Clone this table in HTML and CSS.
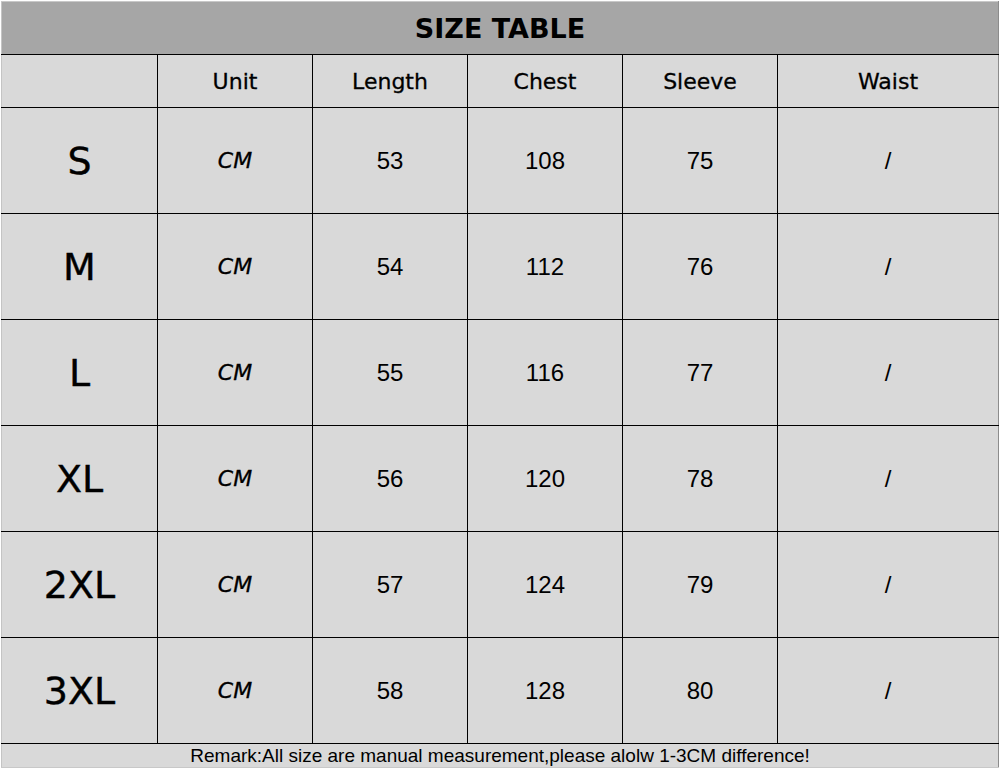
FILE: index.html
```html
<!DOCTYPE html>
<html lang="en">
<head>
<meta charset="utf-8">
<title>Size Table</title>
<link rel="stylesheet" href="styles.css">
</head>
<body>
<table class="size-table">
  <colgroup>
    <col class="c-size">
    <col class="c-std">
    <col class="c-std">
    <col class="c-std">
    <col class="c-std">
    <col class="c-wide">
  </colgroup>
  <tr class="title-row"><td colspan="6">SIZE TABLE</td></tr>
  <tr class="head-row">
    <td class="first"></td>
    <td>Unit</td>
    <td>Length</td>
    <td>Chest</td>
    <td>Sleeve</td>
    <td class="last">Waist</td>
  </tr>
  <tr class="data-row"><td class="first size">S</td><td class="unit">CM</td><td class="num">53</td><td class="num">108</td><td class="num">75</td><td class="num last">/</td></tr>
  <tr class="data-row"><td class="first size">M</td><td class="unit">CM</td><td class="num">54</td><td class="num">112</td><td class="num">76</td><td class="num last">/</td></tr>
  <tr class="data-row"><td class="first size">L</td><td class="unit">CM</td><td class="num">55</td><td class="num">116</td><td class="num">77</td><td class="num last">/</td></tr>
  <tr class="data-row"><td class="first size">XL</td><td class="unit">CM</td><td class="num">56</td><td class="num">120</td><td class="num">78</td><td class="num last">/</td></tr>
  <tr class="data-row"><td class="first size">2XL</td><td class="unit">CM</td><td class="num">57</td><td class="num">124</td><td class="num">79</td><td class="num last">/</td></tr>
  <tr class="data-row"><td class="first size">3XL</td><td class="unit">CM</td><td class="num">58</td><td class="num">128</td><td class="num">80</td><td class="num last">/</td></tr>
  <tr class="remark-row"><td colspan="6">Remark:All size are manual measurement,please alolw 1-3CM difference!</td></tr>
</table>
</body>
</html>
```
FILE: styles.css
```css
html, body {
  margin: 0;
  padding: 0;
  background: #ffffff;
}

body {
  padding: 1px 0 0 1px;
  font-family: "DejaVu Sans", "Liberation Sans", sans-serif;
  color: #000;
}

.size-table {
  border-collapse: collapse;
  table-layout: fixed;
  width: 997px;
}

.c-size { width: 156px; }
.c-std { width: 155px; }
.c-wide { width: 221px; }

.size-table td {
  border: 1px solid #000;
  background: #d9d9d9;
  text-align: center;
  vertical-align: middle;
  padding: 0;
  overflow: hidden;
  white-space: nowrap;
}

.size-table td.first { border-left-color: #c4c4c4; }
.size-table td.last { border-right-color: #8c8c8c; }

.title-row td {
  height: 52px;
  background: #a6a6a6;
  font-weight: bold;
  font-size: 27px;
  border-top-color: #c8c8c8;
  border-left-color: #c4c4c4;
  border-right-color: #8c8c8c;
}

.head-row td {
  height: 52px;
  font-size: 22px;
  -webkit-text-stroke: 0.3px #000;
}

.data-row td {
  height: 105px;
}

.size {
  font-size: 38px;
  -webkit-text-stroke: 0.4px #000;
}

.unit {
  font-size: 22px;
  font-style: italic;
  -webkit-text-stroke: 0.3px #000;
}

.num {
  font-family: "Liberation Sans", Arial, sans-serif;
  font-size: 24px;
}

.remark-row td {
  height: 23px;
  font-family: "Liberation Sans", Arial, sans-serif;
  font-size: 19px;
  line-height: 20px;
  border-color: #000 #8c8c8c #c8c8c8 #c4c4c4;
}
```
